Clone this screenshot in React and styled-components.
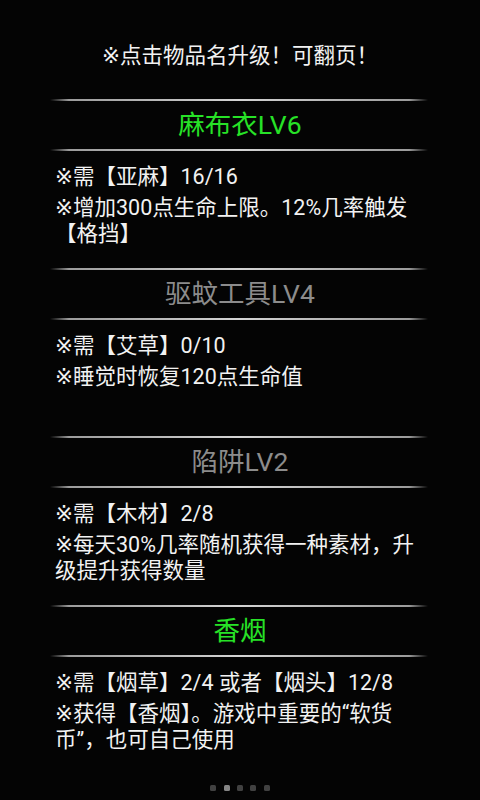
import styled, { createGlobalStyle } from 'styled-components'

const GlobalStyle = createGlobalStyle`
  html, body {
    margin: 0;
    padding: 0;
    background: #040404;
  }
  #root {
    min-height: 100vh;
  }
`

const items = [
  {
    name: '麻布衣LV6',
    active: true,
    lines: ['※需【亚麻】16/16', '※增加300点生命上限。12%几率触发【格挡】'],
  },
  {
    name: '驱蚊工具LV4',
    active: false,
    lines: ['※需【艾草】0/10', '※睡觉时恢复120点生命值'],
  },
  {
    name: '陷阱LV2',
    active: false,
    lines: ['※需【木材】2/8', '※每天30%几率随机获得一种素材，升级提升获得数量'],
  },
  {
    name: '香烟',
    active: true,
    lines: ['※需【烟草】2/4 或者【烟头】12/8', '※获得【香烟】。游戏中重要的“软货币”，也可自己使用'],
  },
]

// Roboto for latin, DejaVu gives the narrow ※, CJK falls through to Noto
const Screen = styled.div`
  min-height: 100vh;
  display: flex;
  flex-direction: column;
  background: #040404;
  color: #f2f2f2;
  font-family: Roboto, "DejaVu Sans", "Noto Sans CJK SC", sans-serif;
`

const Column = styled.div`
  width: 380px;
  margin: 0 auto;
  display: flex;
  flex-direction: column;
`

const Hint = styled.div`
  padding-top: 43px;
  margin-bottom: 30px;
  font-size: 21.5px;
  line-height: 26px;
  text-align: center;
`

const Divider = styled.div`
  height: 2px;
  margin-right: 2px;
  background: linear-gradient(
    90deg,
    rgba(160, 160, 160, 0) 0%,
    #9c9c9c 5%,
    #d4d4d4 50%,
    #9c9c9c 95%,
    rgba(160, 160, 160, 0) 100%
  );
`

const Title = styled.div`
  height: 48px;
  line-height: 48px;
  text-align: center;
  font-size: 26.5px;
  color: ${p => (p.$active ? '#27e227' : '#8c8c8c')};
`

const Body = styled.div`
  height: 116.5px;
  box-sizing: border-box;
  padding: 13px 0 0 5px;
`

const Line = styled.p`
  margin: 0;
  font-size: 21.5px;
  line-height: 26px;
  & + & {
    margin-top: 5px;
  }
`

const Dots = styled.div`
  margin-top: auto;
  padding: 8px 0 9px;
  display: flex;
  justify-content: center;
  gap: 7.3px;
`

const Dot = styled.span`
  width: 6px;
  height: 6px;
  border-radius: 1.5px;
  background: ${p => (p.$on ? '#858585' : '#414141')};
`

export default function App() {
  return (
    <Screen>
      <GlobalStyle />
      <Column>
        <Hint>※点击物品名升级！可翻页！</Hint>
        {items.map(item => (
          <div key={item.name}>
            <Divider />
            <Title $active={item.active}>{item.name}</Title>
            <Divider />
            <Body>
              {item.lines.map(text => (
                <Line key={text}>{text}</Line>
              ))}
            </Body>
          </div>
        ))}
      </Column>
      <Dots>
        {[0, 1, 2, 3, 4].map(i => (
          <Dot key={i} $on={i === 1} />
        ))}
      </Dots>
    </Screen>
  )
}
